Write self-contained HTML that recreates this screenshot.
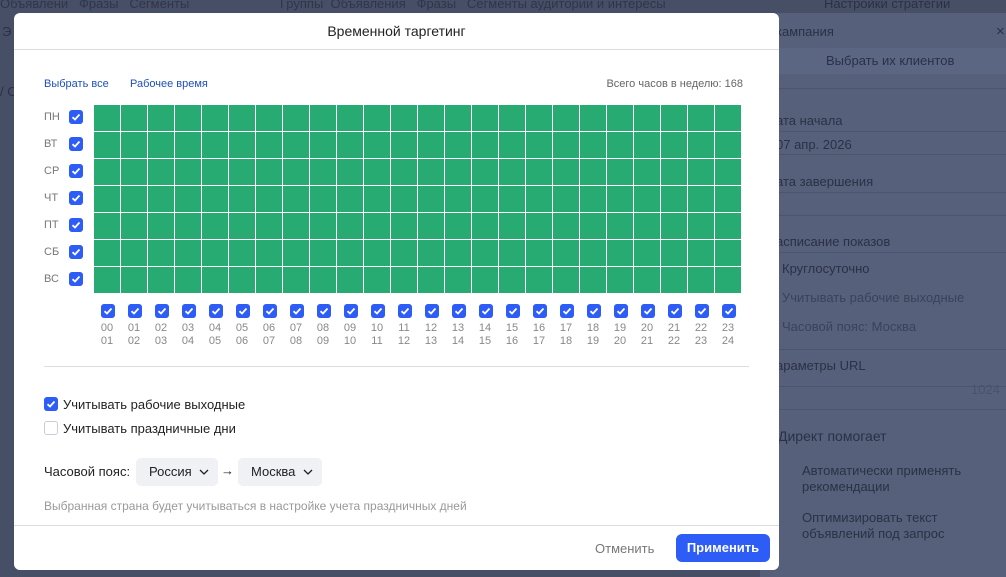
<!DOCTYPE html>
<html><head><meta charset="utf-8"><style>
*{box-sizing:border-box;margin:0;padding:0}
body{width:1006px;height:577px;overflow:hidden;background:#474f66;font-family:"Liberation Sans",sans-serif;position:relative}
.bgt{position:absolute;color:#2a3146;font-size:13px;white-space:nowrap}
.rp{position:absolute;left:760px;top:13px;width:246px;height:564px;background:#56607b}
.rp .l{position:absolute;left:0;right:0;height:1px;background:#4c556e}
.modal{position:absolute;left:14px;top:13px;width:765px;height:557px;background:#fff;border-radius:6px;overflow:hidden}
.title{position:absolute;top:0;left:0;right:0;height:36px;line-height:37px;text-align:center;font-size:14px;color:#222}
.hr{position:absolute;height:1px;background:#dcdde3}
.link{position:absolute;top:65px;font-size:11px;color:#1d4fbf}
.total{position:absolute;top:65px;right:36px;font-size:11px;color:#666}
.grid{position:absolute;left:80px;top:92px;display:grid;grid-template-columns:repeat(24,26px);grid-auto-rows:26px;gap:1px}
.grid div{background:#27ab72}
.cb{position:absolute;width:14px;height:14px;border-radius:3px;background:#2e5cf6}
.cb svg{position:absolute;left:2px;top:2px}
.day{position:absolute;left:30px;font-size:11px;color:#777}
.hl{position:absolute;top:309px;font-size:11px;color:#888;line-height:13px;text-align:center;width:20px}
.opt{position:absolute;left:49px;font-size:13px;color:#222}
.sel{position:absolute;top:445px;height:28px;line-height:28px;background:#f0f1f5;border-radius:5px;font-size:13px;color:#222;padding-left:13px}
.sel svg{position:absolute;right:9px;top:11px}
</style></head><body>
<div class="bgt" style="left:0;top:-4px;color:#2f364b">Объявлени&nbsp;&nbsp;&nbsp;Фразы&nbsp;&nbsp;&nbsp;Сегменты</div>
<div class="bgt" style="left:280px;top:-4px;color:#2f364b">Группы&nbsp;&nbsp;Объявления&nbsp;&nbsp;&nbsp;Фразы&nbsp;&nbsp;&nbsp;Сегменты аудитории и интересы</div>
<div class="bgt" style="left:2px;top:24px">Э</div>
<div class="bgt" style="left:0;top:84px">/ С</div>
<div class="rp">
 <div class="bgt" style="left:64px;top:-17px">Настройки стратегии</div>
 <div class="bgt" style="left:16px;top:11px">кампания</div>
 <div class="bgt" style="left:236px;top:10px;font-size:15px">×</div>
 <div style="position:absolute;left:0;right:0;top:35px;height:26px;background:#5b6682"></div>
 <div class="bgt" style="left:66px;top:40px">Выбрать их клиентов</div>
 <div class="l" style="top:75px"></div>
 <div class="bgt" style="left:16px;top:100px">ата начала</div>
 <div class="l" style="top:118px"></div>
 <div class="bgt" style="left:16px;top:124px">07 апр. 2026</div>
 <div class="l" style="top:141px"></div>
 <div class="bgt" style="left:16px;top:161px">ата завершения</div>
 <div class="l" style="top:179px"></div><div class="l" style="top:202px"></div>
 <div class="bgt" style="left:16px;top:221px">асписание показов</div>
 <div class="l" style="top:239px"></div>
 <div class="bgt" style="left:22px;top:248px">Круглосуточно</div>
 <div class="bgt" style="left:22px;top:277px;color:#3a425a">Учитывать рабочие выходные</div>
 <div class="bgt" style="left:22px;top:306px;color:#3a425a">Часовой пояс: Москва</div>
 <div class="l" style="top:336px"></div>
 <div class="bgt" style="left:16px;top:345px">араметры URL</div>
 <div class="l" style="top:373px"></div>
 <div class="bgt" style="left:211px;top:369px;color:#4a536c">1024</div>
 <div class="l" style="top:396px"></div>
 <div class="bgt" style="left:18px;top:415px;font-size:14px">Директ помогает</div>
 <div class="bgt" style="left:42px;top:450px;line-height:16px">Автоматически применять<br>рекомендации</div>
 <div class="bgt" style="left:42px;top:497px;line-height:16px">Оптимизировать текст<br>объявлений под запрос</div>
</div>
<div class="modal">
 <div class="title">Временной таргетинг</div>
 <div class="hr" style="top:36px;left:0;right:0"></div>
 <div class="link" style="left:30px">Выбрать все</div>
 <div class="link" style="left:116px">Рабочее время</div>
 <div class="total">Всего часов в неделю: 168</div>
 <div class="grid" id="g"></div>
 <div id="d"></div>
 <div class="hr" style="top:353px;left:30px;right:30px"></div>
 <div class="cb" style="left:30px;top:384px"><svg width="10" height="10" viewBox="0 0 10 10"><path d="M1.5 5.2 4 7.5 8.5 2.5" stroke="#fff" stroke-width="1.8" fill="none"/></svg></div>
 <div class="opt" style="top:384px">Учитывать рабочие выходные</div>
 <div style="position:absolute;left:30px;top:408px;width:14px;height:14px;border:1px solid #ccd;border-radius:3px"></div>
 <div class="opt" style="top:408px">Учитывать праздничные дни</div>
 <div style="position:absolute;left:30px;top:451px;font-size:13px;color:#222">Часовой пояс:</div>
 <div class="sel" style="left:122px;width:82px">Россия<svg width="10" height="6" viewBox="0 0 10 6"><path d="M1 1l4 4 4-4" stroke="#222" stroke-width="1.3" fill="none"/></svg></div>
 <div style="position:absolute;left:207px;top:450px;font-size:13px;color:#222">→</div>
 <div class="sel" style="left:224px;width:84px">Москва<svg width="10" height="6" viewBox="0 0 10 6"><path d="M1 1l4 4 4-4" stroke="#222" stroke-width="1.3" fill="none"/></svg></div>
 <div style="position:absolute;left:30px;top:486px;font-size:12px;color:#999">Выбранная страна будет учитываться в настройке учета праздничных дней</div>
 <div class="hr" style="top:512px;left:0;right:0"></div>
 <div style="position:absolute;left:581px;top:528px;font-size:13px;color:#777">Отменить</div>
 <div style="position:absolute;left:662px;top:521px;width:94px;height:28px;background:#2e5cf6;border-radius:6px;color:#fff;font-size:13px;font-weight:bold;text-align:center;line-height:28px">Применить</div>
</div>
<script>
var g=document.getElementById('g'),h='';for(var i=0;i<168;i++)h+='<div></div>';g.innerHTML=h;
var ck='<svg width="10" height="10" viewBox="0 0 10 10"><path d="M1.5 5.2 4 7.5 8.5 2.5" stroke="#fff" stroke-width="1.8" fill="none"/></svg>';
var days=['ПН','ВТ','СР','ЧТ','ПТ','СБ','ВС'],s='';
for(var r=0;r<7;r++){var y=97+r*27;s+='<div class="day" style="top:'+(y+1)+'px">'+days[r]+'</div><div class="cb" style="left:55px;top:'+y+'px">'+ck+'</div>';}
for(var c=0;c<24;c++){var x=80+c*27;var a=('0'+c).slice(-2),b=('0'+(c+1)).slice(-2);
s+='<div class="cb" style="left:'+(x+7)+'px;top:291px">'+ck+'</div><div class="hl" style="left:'+(x+3)+'px">'+a+'<br>'+b+'</div>';}
document.getElementById('d').innerHTML=s;
</script>
</body></html>
